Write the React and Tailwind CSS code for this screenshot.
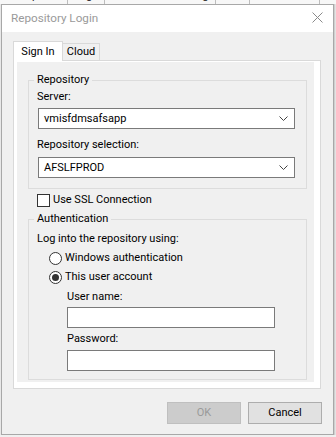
export default function App() {
  const Chevron = () => (
    <svg width="9" height="5" viewBox="0 0 9 5" className="shrink-0">
      <polyline points="0.5,0.5 4.5,4.5 8.5,0.5" fill="none" stroke="#444" strokeWidth="1" />
    </svg>
  );

  const Combo = ({ value }) => (
    <div className="ml-[1px] w-[257px] h-[21px] bg-white border border-[#7a7a7a] flex items-center pl-[5px] pr-[6px]">
      <span className="flex-1 leading-[16px]">{value}</span>
      <Chevron />
    </div>
  );

  const bgTabs = [
    { label: 'Template', w: 68 },
    { label: 'Tags', w: 37 },
    { label: 'Document Handling', w: 111 },
    { label: 'Text', w: 34 },
    { label: 'Advanced', w: 70 },
  ];

  return (
    <div className="w-[336px] h-[437px] overflow-hidden bg-[#f0f0f0] font-['Roboto',sans-serif] text-[11px] text-black flex flex-col">
      {/* app behind the dialog */}
      <div className="h-[4px] overflow-hidden bg-[#f7f7f7] flex shrink-0">
        {bgTabs.map((t) => (
          <div key={t.label} className="h-[16px] -mt-[12px] border-r border-[#bdbdbd] flex justify-center leading-[16px] text-[#222]" style={{ width: t.w }}>
            {t.label}
          </div>
        ))}
      </div>

      <div className="flex shrink-0">
        <div className="w-[1px] bg-[#e8e8e8]" />

        {/* dialog */}
        <div className="w-[333px] h-[431px] border border-[#a8a8a8] bg-[#f0f0f0] flex flex-col">
          {/* title bar */}
          <div className="h-[27px] bg-white flex items-center pl-[9px] pr-[10px] pb-[2px]">
            <span className="flex-1 text-[11.7px] text-[#9a9a9a] leading-[16px]">Repository Login</span>
            <svg width="11" height="11" viewBox="0 0 11 11">
              <path d="M0.5 0.5 L10.5 10.5 M10.5 0.5 L0.5 10.5" stroke="#8a8a8a" strokeWidth="1" />
            </svg>
          </div>

          {/* body */}
          <div className="flex-1 pt-[9px] pl-[11px] pr-[11px] flex flex-col">
            {/* tabs */}
            <div className="flex items-end h-[19px]">
              <div className="relative z-10 w-[50px] h-[20px] -mb-[1px] bg-white border border-b-0 border-[#d9d9d9] flex items-center justify-center leading-[16px]">
                Sign In
              </div>
              <div className="w-[37px] h-[17px] bg-[#f0f0f0] border border-l-0 border-b-0 border-[#d9d9d9] flex items-center justify-center leading-[16px]">
                Cloud
              </div>
            </div>

            {/* tab panel */}
            <div className="w-[308px] h-[329px] bg-white border border-[#d9d9d9] pt-[1px] pl-[3px] pr-[6px] pb-[6px]">
              <div className="h-full bg-[#f0f0f0] pt-[10px] pl-[11px]">
                <fieldset className="w-[279px] border border-[#dcdcdc] px-[8px] pb-[10px]">
                  <legend className="-ml-[3px] px-[3px] leading-[16px]">Repository</legend>
                  <div className="mt-[1px] leading-[16px]">Server:</div>
                  <div className="mt-[3px]">
                    <Combo value="vmisfdmsafsapp" />
                  </div>
                  <div className="mt-[8px] leading-[16px]">Repository selection:</div>
                  <div className="mt-[4px]">
                    <Combo value="AFSLFPROD" />
                  </div>
                </fieldset>

                <div className="mt-[3px] ml-[9px] flex items-center h-[16px] gap-[3px]">
                  <div className="w-[13px] h-[13px] border border-[#333] bg-white" />
                  <span className="leading-[16px]">Use SSL Connection</span>
                </div>

                <fieldset className="mt-[3px] w-[279px] border border-[#dcdcdc] px-[8px] pb-[8px]">
                  <legend className="-ml-[3px] px-[3px] leading-[16px]">Authentication</legend>
                  <div className="mt-[4px] leading-[16px]">Log into the repository using:</div>
                  <div className="mt-[3px] ml-[12px] flex items-center h-[16px] gap-[3px]">
                    <div className="w-[13px] h-[13px] rounded-full border border-[#333] bg-white" />
                    <span className="leading-[16px]">Windows authentication</span>
                  </div>
                  <div className="mt-[3px] ml-[12px] flex items-center h-[16px] gap-[3px]">
                    <div className="w-[13px] h-[13px] rounded-full border border-[#333] bg-white flex items-center justify-center">
                      <div className="w-[7px] h-[7px] rounded-full bg-[#333]" />
                    </div>
                    <span className="leading-[16px]">This user account</span>
                  </div>
                  <div className="mt-[4px] ml-[30px] leading-[16px]">User name:</div>
                  <div className="mt-[2px] ml-[30px] w-[208px] h-[21px] bg-white border border-[#7a7a7a]" />
                  <div className="mt-[3px] ml-[30px] leading-[16px]">Password:</div>
                  <div className="mt-[3px] ml-[30px] w-[208px] h-[21px] bg-white border border-[#7a7a7a]" />
                </fieldset>
              </div>
            </div>

            {/* buttons */}
            <div className="mt-[13px] flex justify-end gap-[7px]">
              <div className="w-[74px] h-[22px] bg-[#cccccc] border border-[#bfbfbf] flex items-center justify-center text-[#9a9a9a] leading-[16px]">
                OK
              </div>
              <div className="w-[74px] h-[22px] bg-[#e1e1e1] border border-[#adadad] flex items-center justify-center leading-[16px]">
                Cancel
              </div>
            </div>
          </div>
        </div>

        <div className="flex-1 bg-[#e3e3e3] border-l border-[#cfcfcf]" />
      </div>
    </div>
  );
}
